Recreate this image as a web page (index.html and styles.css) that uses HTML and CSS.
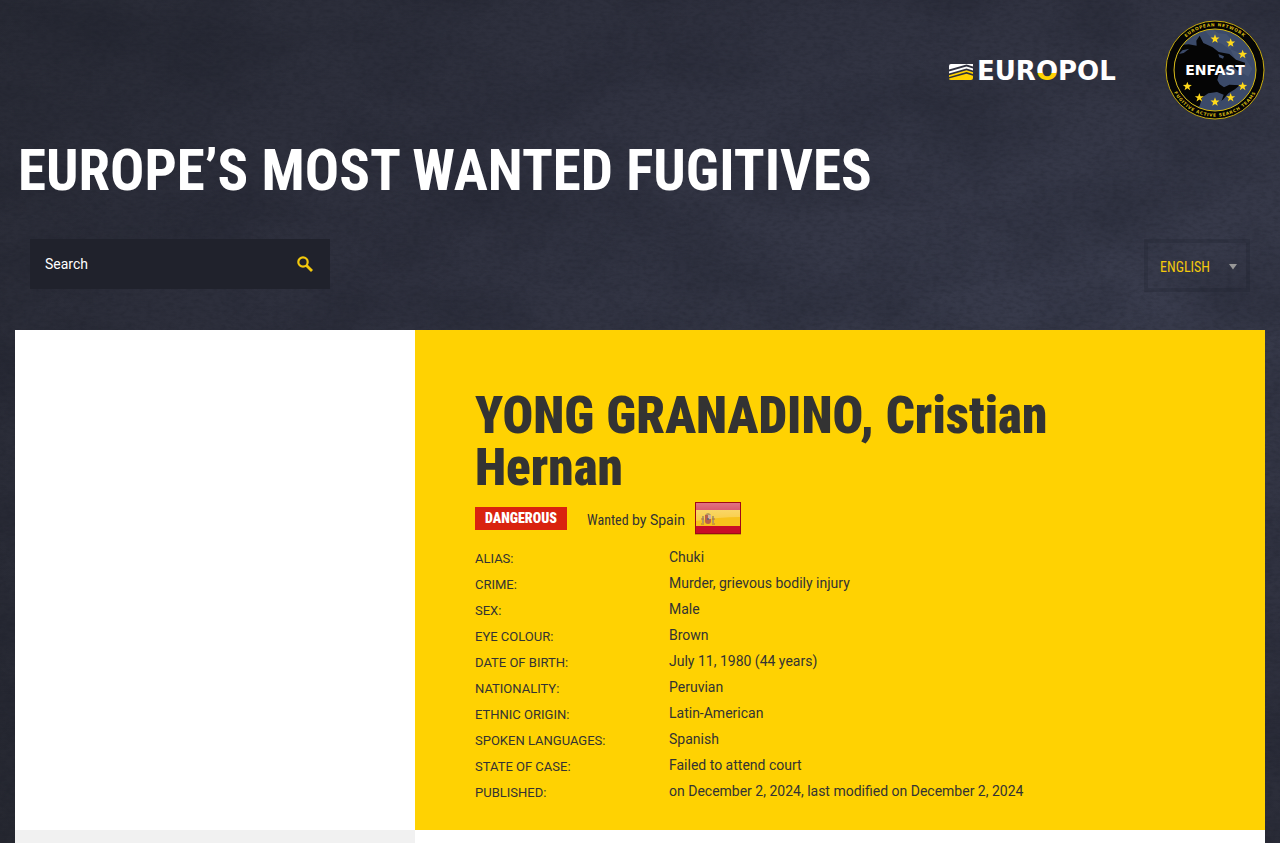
FILE: index.html
```html
<!DOCTYPE html>
<html lang="en">
<head>
<meta charset="utf-8">
<meta name="viewport" content="width=device-width, initial-scale=1">
<title>Europe's Most Wanted Fugitives</title>
<link rel="stylesheet" href="styles.css">
</head>
<body>
<svg class="texture" aria-hidden="true" preserveAspectRatio="none">
  <filter id="clouds" x="0" y="0" width="100%" height="100%" color-interpolation-filters="sRGB"><feTurbulence type="fractalNoise" baseFrequency="0.008 0.012" numOctaves="7" seed="8"/><feColorMatrix values="0 0 0 0 0.09  0 0 0 0 0.1  0 0 0 0 0.14  1.3 0 0 0 -0.5"/></filter>
  <filter id="grain" x="0" y="0" width="100%" height="100%" color-interpolation-filters="sRGB"><feTurbulence type="fractalNoise" baseFrequency="0.15 0.3" numOctaves="3" seed="3"/><feColorMatrix values="0 0 0 0 0.1  0 0 0 0 0.11  0 0 0 0 0.15  1 0 0 0 -0.4"/></filter>
  <rect width="100%" height="100%" filter="url(#clouds)" opacity="0.45"/>
  <rect width="100%" height="100%" filter="url(#grain)" opacity="0.5"/>
</svg>
<div class="page">
  <header class="site-header">
    <div class="logos">
      <a class="logo" href="#europol" aria-label="Europol">
        <svg class="europol" viewBox="0 0 176 36">
          <defs><linearGradient id="duo" x1="0" y1="0" x2="0" y2="36" gradientUnits="userSpaceOnUse"><stop offset="0.58" stop-color="#fff"/><stop offset="0.58" stop-color="#ffd200"/></linearGradient></defs>
          <g fill="#fff">
            <path d="M1 14Q1 12 3 12H25V14.500L18.500 12.600L1 17.500Z"/>
            <path d="M1 19.500L18.500 14.500L25 16.500V18.500L18.500 16.500L1 21.500Z"/>
          </g>
          <g fill="#ffd200">
            <path d="M1 23.200L18.500 18.200L25 20.200V22L18.500 20L1 25Z"/>
            <path d="M1 26.500L18.500 21.700L25 23.700V26Q25 28 23 28H3Q1 28 1 26.500Z"/>
          </g>
          <text class="europol-name" x="29" y="28">EUR<tspan fill="url(#duo)">O</tspan>POL</text>
        </svg>
      </a>
      <a class="logo" href="#enfast" aria-label="ENFAST">
        <svg class="enfast" viewBox="30 30 300 300">
          <defs>
            <path id="arc-top" d="M49 180A131 131 0 0 1 311 180"/>
            <path id="arc-bottom" d="M40 180A140 140 0 0 0 320 180"/>
            <path id="star" d="M0-14L3.500-4.600L13.500-4.300L5.600 1.900L8.400 11.500L0 5.800L-8.400 11.500L-5.600 1.900L-13.500-4.300L-3.500-4.600Z"/>
            <clipPath id="disc"><circle cx="180" cy="180" r="122"/></clipPath>
          </defs>
          <circle cx="180" cy="180" r="147" fill="#050505" stroke="#c9ad10" stroke-width="3"/>
          <circle cx="180" cy="180" r="123" fill="#3b4a69"/>
          <g clip-path="url(#disc)">
            <path d="M150 62L172 58L190 70L214 72L235 96L226 120L202 102L176 92ZM226 118L262 132L292 176L280 200L258 186Z" fill="#53617d" opacity=".4"/>
            <path d="M50 130L76 105L101 103L125 107L124 92L134 77L145 99L173 112L191 126L223 132L243 149L270 158L269 169L255 172L249 182L234 171L226 169L204 180L191 194L187 210L194 223L207 232L223 224L254 226L240 238L220 250L205 268L190 280L160 284L126 290L100 310L40 240Z" fill="#050505"/>
            <path d="M190 132L207 139L204 146L193 142Z" fill="#3b4a69"/>
            <path d="M72 132L82 121L103 116L86 129Z" fill="#3b4a69"/>
            <path d="M142 262L160 250L186 246L206 254L190 300H130Z" fill="#3b4a69"/>
          </g>
          <circle cx="180" cy="180" r="123" fill="none" stroke="#d8ba12" stroke-width="3"/>
          <g fill="#ffd91a">
            <use href="#star" x="180" y="87"/><use href="#star" x="227" y="99"/><use href="#star" x="263" y="133"/>
            <use href="#star" x="97" y="229"/><use href="#star" x="133" y="263"/><use href="#star" x="180" y="276"/>
            <use href="#star" x="227" y="263"/><use href="#star" x="263" y="229"/>
          </g>
          <text class="ring"><textPath href="#arc-top" startOffset="50%">EUROPEAN NETWORK</textPath></text>
          <text class="ring"><textPath href="#arc-bottom" startOffset="50%">FUGITIVE ACTIVE SEARCH TEAMS</textPath></text>
          <text class="enfast-name" x="180" y="195">ENFAST</text>
        </svg>
      </a>
    </div>
    <h1 class="site-title">EUROPE’S MOST WANTED FUGITIVES</h1>
    <div class="tools">
      <form class="search">
        <input class="search-box" type="text" placeholder="Search" aria-label="Search">
        <button class="search-button" type="submit" aria-label="Submit search">
          <svg class="search-icon" viewBox="0 0 16 16"><circle cx="6" cy="6" r="4.700" fill="none" stroke="#f3c90c" stroke-width="2.200"/><path d="M9.500 9.500L15 15" stroke="#f3c90c" stroke-width="2.800"/></svg>
        </button>
      </form>
      <div class="language">
        <select class="language-select" aria-label="Language"><option>ENGLISH</option></select>
        <svg class="language-arrow" viewBox="0 0 8 6" aria-hidden="true"><path d="M0 0H8L4 5.500Z" fill="#999"/></svg>
      </div>
    </div>
  </header>
  <main class="profile">
    <div class="photo"></div>
    <section class="details">
      <h2 class="name">YONG GRANADINO, Cristian Hernan</h2>
      <div class="status">
        <span class="danger">DANGEROUS</span>
        <span class="wanted"><span class="wanted-word">Wanted</span> by Spain</span>
        <svg class="flag" viewBox="0 0 48 36" role="img" aria-label="Spain">
          <defs><linearGradient id="gloss" x1="0" y1="0" x2="0" y2="1"><stop offset="0" stop-color="#fff" stop-opacity=".42"/><stop offset="1" stop-color="#fff" stop-opacity=".18"/></linearGradient></defs>
          <rect x="1" y="3" width="46" height="31" fill="#7a5a00" opacity=".4"/>
          <rect x="1" y="1" width="46" height="32" fill="#c90d28"/>
          <rect x="1" y="9" width="46" height="16" fill="#f7c21c"/>
          <path d="M2 2H46V16Q24 16 2 20Z" fill="url(#gloss)"/>
          <g fill="#b59a5c"><rect x="8" y="15" width="2" height="7"/><rect x="18" y="15" width="2" height="7"/><path d="M11 14Q14 10 17 14Z"/></g>
          <path d="M11 14H17V20Q17 23 14 23Q11 23 11 20Z" fill="#b9604a"/>
          <path d="M14 14H17V18H14Z" fill="#d3b49a"/><circle cx="14" cy="18" r="1" fill="#567"/>
          <path d="M7 18H10M18 18H21M7 23H10M18 23H21" stroke="#a8744c"/>
          <rect x="1.500" y="1.500" width="45" height="31" fill="none" stroke="#a00818"/>
        </svg>
      </div>
      <dl class="facts">
        <dt>ALIAS:</dt><dd>Chuki</dd>
        <dt>CRIME:</dt><dd>Murder, grievous bodily injury</dd>
        <dt>SEX:</dt><dd>Male</dd>
        <dt>EYE COLOUR:</dt><dd>Brown</dd>
        <dt>DATE OF BIRTH:</dt><dd>July 11, 1980 (44 years)</dd>
        <dt>NATIONALITY:</dt><dd>Peruvian</dd>
        <dt>ETHNIC ORIGIN:</dt><dd>Latin-American</dd>
        <dt>SPOKEN LANGUAGES:</dt><dd>Spanish</dd>
        <dt>STATE OF CASE:</dt><dd>Failed to attend court</dd>
        <dt>PUBLISHED:</dt><dd>on December 2, 2024, last modified on December 2, 2024</dd>
      </dl>
    </section>
    <div class="below-photo"></div>
    <div class="below-details"></div>
  </main>
</div>
</body>
</html>
```
FILE: styles.css
```css
* { box-sizing: border-box; }
html { height: 100%; }
body {
  margin: 0;
  height: 100%;
  overflow: hidden;
  position: relative;
  color: #333;
  font: 14px/20px Roboto, sans-serif;
  background: radial-gradient(ellipse at 88% 36%, #393c4d 0%, #2f313f 45%, #262831 100%);
}
.texture { position: absolute; inset: 0; width: 100%; height: 100%; }
.page { position: relative; height: 100%; padding: 0 15px; display: flex; flex-direction: column; }
.site-header { padding-top: 20px; }
.logos { display: flex; justify-content: flex-end; align-items: center; gap: 41px; }
.logo { display: block; text-decoration: none; }
.europol { display: block; width: 176px; height: 36px; overflow: visible; }
.europol-name { font: bold 26px "DejaVu Sans", sans-serif; fill: #fff; }
.enfast { display: block; width: 100px; height: 100px; }
.enfast-name { font: bold 42px "DejaVu Sans", sans-serif; fill: #fff; text-anchor: middle; }
.ring { font: bold 13px "DejaVu Sans", sans-serif; fill: #d8ba12; text-anchor: middle; letter-spacing: 2px; }
.site-title {
  margin: 17px 0 34px;
  padding-left: 3px;
  color: #fff;
  font: bold 57px/68px "Roboto Condensed", Roboto, sans-serif;
}
.tools { display: flex; justify-content: space-between; padding: 0 15px; margin-bottom: 38px; }
.search { display: flex; width: 300px; height: 50px; }
.search-box { flex: 1; min-width: 0; border: 0; padding: 0 15px; background: #20222c; color: #fff; font: inherit; }
.search-box::placeholder { color: #fff; opacity: 1; }
.search-button { width: 50px; border: 0; padding: 0; background: #20222c; display: grid; place-items: center; }
.search-icon { width: 16px; height: 16px; }
.language { position: relative; }
.language-select {
  display: block;
  width: 106px;
  height: 53px;
  padding: 3px 12px 0;
  border: 4px solid rgba(28, 30, 42, .25);
  border-radius: 0;
  appearance: none;
  background: none;
  color: #f3c90c;
  font: 14px "Roboto Condensed", Roboto, sans-serif;
}
.language-arrow { position: absolute; right: 13px; top: 25px; width: 8px; height: 6px; pointer-events: none; }
.profile { flex: 1; display: grid; grid-template-columns: 400px 1fr; grid-template-rows: auto 1fr; background: #fff; }
.details { min-height: 500px; padding: 60px 60px 24px; background: #ffd202; }
.name { margin: 0; max-width: 640px; font: 900 51px/52px "Roboto Condensed", Roboto, sans-serif; }
.status { display: flex; align-items: center; height: 50px; }
.danger { margin-bottom: 2px; padding: 0 10px; background: #d9230f; color: #fff; font: 900 14px/23px "Roboto Condensed", Roboto, sans-serif; }
.wanted { margin: 2px 9px 0 20px; }
.wanted-word { font-family: "Roboto Condensed", Roboto, sans-serif; }
.flag { width: 48px; height: 36px; }
.facts { display: grid; grid-template-columns: 194px 1fr; grid-auto-rows: 26px; margin: 0; line-height: 26px; }
.facts dt { font-size: 13px; padding-top: 2px; }
.facts dd { margin: 0; }
.below-photo { background: #f1f1f1; }
.below-details { background: #fff; }
```
